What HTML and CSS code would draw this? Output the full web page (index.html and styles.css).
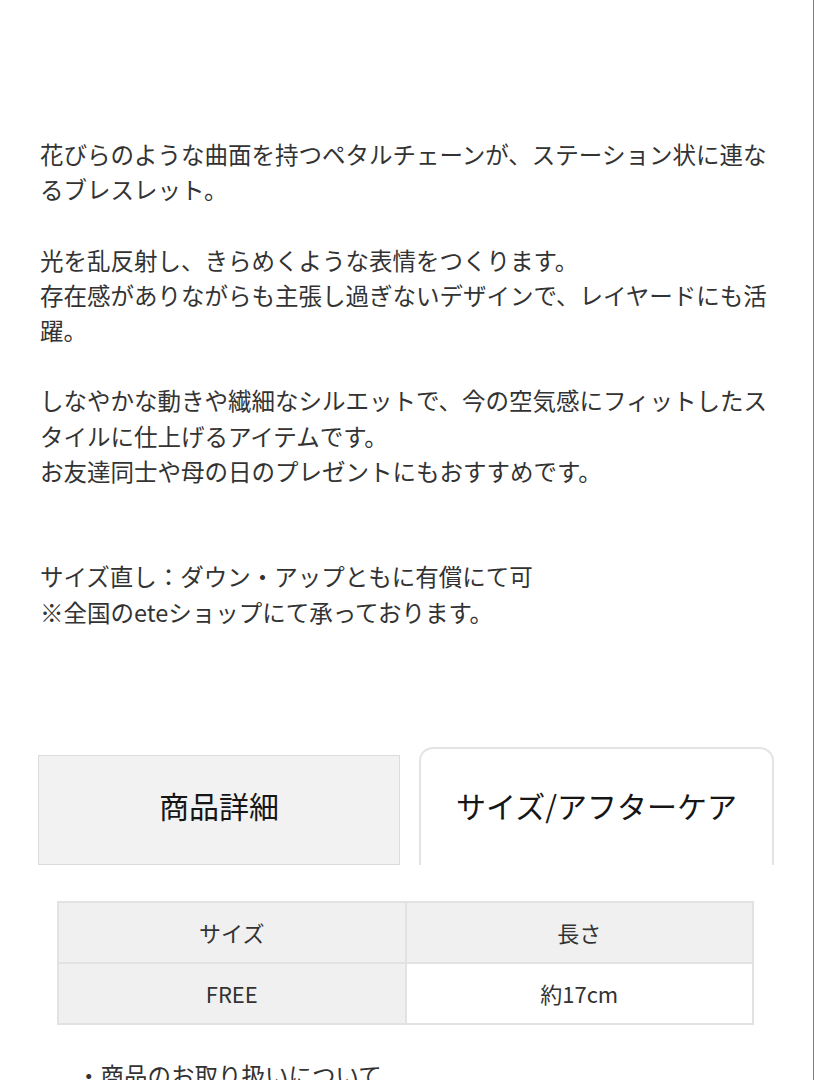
FILE: index.html
```html
<!DOCTYPE html>
<html lang="ja">
<head>
<meta charset="utf-8">
<title>商品説明</title>
<link rel="stylesheet" href="styles.css">
</head>
<body>
<div class="page">
  <div class="desc">
    <p>花びらのような曲面を持つペタルチェーンが、ステーション状に連なるブレスレット。</p>
    <p class="gap1">光を乱反射し、きらめくような表情をつくります。<br>存在感がありながらも主張し過ぎないデザインで、レイヤードにも活躍。</p>
    <p class="gap1">しなやかな動きや繊細なシルエットで、今の空気感にフィットしたスタイルに仕上げるアイテムです。<br>お友達同士や母の日のプレゼントにもおすすめです。</p>
    <p class="gap2">サイズ直し：ダウン・アップともに有償にて可<br>※全国のeteショップにて承っております。</p>
  </div>

  <div class="tabs">
    <div class="tab tab-off">商品詳細</div>
    <div class="tab tab-on">サイズ/アフターケア</div>
  </div>

  <table class="size-table">
    <tr>
      <th>サイズ</th>
      <th>長さ</th>
    </tr>
    <tr>
      <th>FREE</th>
      <td>約17cm</td>
    </tr>
  </table>

  <p class="note">・商品のお取り扱いについて</p>
</div>
</body>
</html>
```

FILE: styles.css
```css
html, body {
  margin: 0;
  padding: 0;
  background: #fff;
}

body {
  font-family: "Noto Sans CJK JP", "Noto Sans", sans-serif;
  color: #333;
}

.page {
  width: 813px;
  min-height: 1080px;
  border-right: 1px solid #7d7d7d;
  overflow: hidden;
}

.desc {
  padding: 137px 0 0 40px;
  width: 735px;
  font-size: 23.5px;
  line-height: 35.2px;
}

.desc p {
  margin: 0;
}

.desc .gap1 {
  margin-top: 35.2px;
}

.desc .gap2 {
  margin-top: 70.4px;
}

.tabs {
  display: flex;
  align-items: flex-end;
  gap: 19px;
  margin: 117px 0 0 38px;
}

.tab {
  box-sizing: border-box;
  text-align: center;
  font-size: 30px;
  line-height: 40px;
  color: #161616;
}

.tab-off {
  width: 362px;
  height: 110px;
  padding-top: 29px;
  background: #f2f2f2;
  border: 1px solid #dcdcdc;
}

.tab-on {
  width: 355px;
  height: 118px;
  padding-top: 36px;
  background: #fff;
  border: 2px solid #e4e4e4;
  border-bottom: none;
  border-radius: 14px 14px 0 0;
}

.size-table {
  margin: 36px 0 0 57px;
  width: 697px;
  border-collapse: collapse;
  table-layout: fixed;
  font-size: 22px;
  color: #333;
}

.size-table th,
.size-table td {
  height: 59px;
  border: 2px solid #e2e2e2;
  text-align: center;
  font-weight: normal;
  padding: 0;
}

.size-table th {
  background: #f0f0f0;
}

.size-table td {
  background: #fff;
}

.note {
  margin: 33px 0 0 77px;
  font-size: 23.5px;
  line-height: 35.2px;
}
```
